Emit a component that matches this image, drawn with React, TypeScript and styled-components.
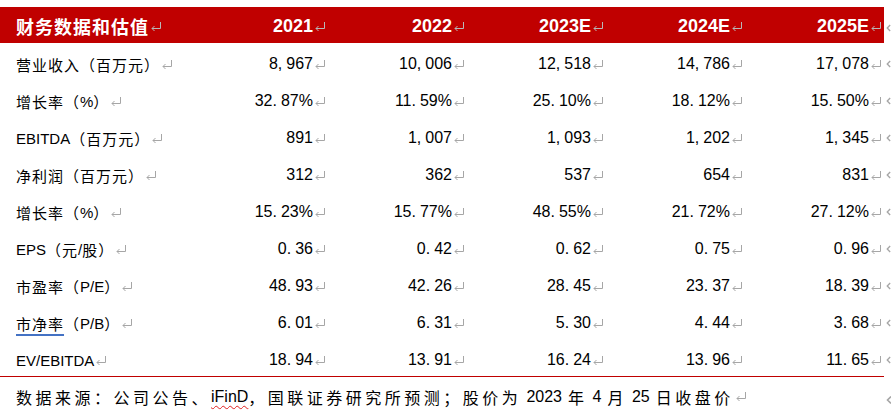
import React from 'react';
import styled, { createGlobalStyle } from 'styled-components';

const Global = createGlobalStyle`
  html, body { margin: 0; padding: 0; background: #fff; }
  body { font-family: "Liberation Sans", "Noto Sans CJK SC", sans-serif; color: #000; }
`;

const RED = '#c00000';
const MARK = '#a6a6a6';

const Page = styled.div`
  width: 891px;
  height: 417px;
  padding-top: 7px;
  box-sizing: border-box;
  overflow: hidden;
`;

const Table = styled.div`
  display: grid;
  grid-template-columns: 189px repeat(5, 139px) 7px;
  grid-template-rows: 36px repeat(9, 37px);
`;

const HeadCell = styled.div<{ $first?: boolean }>`
  background: ${RED};
  color: #fff;
  font-weight: 700;
  font-size: 18px;
  display: flex;
  align-items: center;
  justify-content: ${(p) => (p.$first ? 'flex-start' : 'flex-end')};
  padding: ${(p) => (p.$first ? '2px 0 0 16px' : '2px 2px 0 0')};
  box-sizing: border-box;
  white-space: nowrap;
`;

const LabelCell = styled.div`
  display: flex;
  align-items: center;
  padding: 5px 0 0 16px;
  font-size: 15px;
  white-space: nowrap;
  box-sizing: border-box;
`;

const NumCell = styled.div`
  display: flex;
  align-items: center;
  justify-content: flex-end;
  padding: 5px 2px 0 0;
  font-size: 16px;
  white-space: nowrap;
  box-sizing: border-box;
`;

const EdgeCell = styled.div`
  display: flex;
  align-items: center;
  padding: 5px 0 0 2px;
  box-sizing: border-box;
`;

const Cjk = styled.span<{ $gap: number }>`
  letter-spacing: ${(p) => p.$gap}px;
`;

const Latin = styled.span`
  padding: 0 6px 0 5px;
`;

const Sep = styled.span`
  margin-right: 4px;
`;

const GrammarMark = styled.span`
  text-decoration: underline;
  text-decoration-color: #4472c4;
  text-decoration-thickness: 1.5px;
  text-underline-offset: 4px;
`;

const SpellMark = styled.span`
  text-decoration: underline wavy #e02020;
  text-decoration-thickness: 1px;
  text-underline-offset: 3px;
`;

const TitleText = styled.span`
  letter-spacing: 1px;
  font-family: "Noto Sans CJK SC", sans-serif;
  font-weight: 700;
`;

const ReturnSvg = styled.svg`
  flex: none;
  margin-left: 1px;
`;

const Footer = styled.div`
  width: 884px;
  border-top: 1.5px solid ${RED};
  display: flex;
  align-items: center;
  height: 38px;
  padding: 2px 0 0 16px;
  box-sizing: border-box;
  font-size: 16px;
  white-space: nowrap;
  position: relative;
`;

const FooterEdge = styled.span`
  position: absolute;
  left: 886px;
  top: 14px;
`;

const Ret: React.FC<{ color?: string }> = ({ color = MARK }) => (
  <ReturnSvg width="12" height="11" viewBox="0 0 12 11">
    <path d="M10.5 1 V7.5 H2" fill="none" stroke={color} strokeWidth="1" />
    <path d="M4.5 5 L2 7.5 L4.5 10" fill="none" stroke={color} strokeWidth="1" />
  </ReturnSvg>
);

const Chev: React.FC = () => (
  <svg width="6" height="10" viewBox="0 0 6 10">
    <path d="M5 1.5 L1.5 5 L5 8.5" fill="none" stroke={MARK} strokeWidth="1.6" />
  </svg>
);

const CJK_RE = /([\u3000-\u303f\u4e00-\u9fff\uff00-\uffef]+)/;

const mixText = (s: string, gap: number) =>
  s.split(CJK_RE).map((part, i) =>
    CJK_RE.test(part) ? (
      <Cjk key={i} $gap={gap}>
        {part}
      </Cjk>
    ) : (
      <React.Fragment key={i}>{part}</React.Fragment>
    )
  );

const Num: React.FC<{ v: string }> = ({ v }) => (
  <>
    {v.split(/([,.])/).map((p, i) =>
      p === ',' || p === '.' ? <Sep key={i}>{p}</Sep> : <React.Fragment key={i}>{p}</React.Fragment>
    )}
  </>
);

const years = ['2021', '2022', '2023E', '2024E', '2025E'];

type Row = { label: React.ReactNode; values: string[] };

const rows: Row[] = [
  { label: mixText('营业收入（百万元）', 1), values: ['8,967', '10,006', '12,518', '14,786', '17,078'] },
  { label: mixText('增长率（%）', 1), values: ['32.87%', '11.59%', '25.10%', '18.12%', '15.50%'] },
  { label: mixText('EBITDA（百万元）', 1), values: ['891', '1,007', '1,093', '1,202', '1,345'] },
  { label: mixText('净利润（百万元）', 1), values: ['312', '362', '537', '654', '831'] },
  { label: mixText('增长率（%）', 1), values: ['15.23%', '15.77%', '48.55%', '21.72%', '27.12%'] },
  { label: mixText('EPS（元/股）', 1), values: ['0.36', '0.42', '0.62', '0.75', '0.96'] },
  { label: mixText('市盈率（P/E）', 1), values: ['48.93', '42.26', '28.45', '23.37', '18.39'] },
  {
    label: (
      <>
        <GrammarMark>
          <Cjk $gap={1}>市净率</Cjk>
        </GrammarMark>
        <Cjk $gap={1}>（</Cjk>P/B<Cjk $gap={1}>）</Cjk>
      </>
    ),
    values: ['6.01', '6.31', '5.30', '4.44', '3.68'],
  },
  { label: 'EV/EBITDA', values: ['18.94', '13.91', '16.24', '13.96', '11.65'] },
];

export default function App() {
  return (
    <Page>
      <Global />
      <Table>
        <HeadCell $first>
          <TitleText>财务数据和估值</TitleText>
          <Ret color="#b8b8b8" />
        </HeadCell>
        {years.map((y) => (
          <HeadCell key={y}>
            {y}
            <Ret color="#b8b8b8" />
          </HeadCell>
        ))}
        <EdgeCell>
          <Chev />
        </EdgeCell>
        {rows.map((r, ri) => (
          <React.Fragment key={ri}>
            <LabelCell>
              {r.label}
              <Ret />
            </LabelCell>
            {r.values.map((v, vi) => (
              <NumCell key={vi}>
                <Num v={v} />
                <Ret />
              </NumCell>
            ))}
            <EdgeCell>
              <Chev />
            </EdgeCell>
          </React.Fragment>
        ))}
      </Table>
      <Footer>
        <Cjk $gap={3.5}>数据来源：公司公告、</Cjk>
        <SpellMark>iFinD</SpellMark>
        <Cjk $gap={3.5}>，国联证券研究所预测；股价为</Cjk>
        <Latin>2023</Latin>
        <Cjk $gap={3.5}>年</Cjk>
        <Latin>4</Latin>
        <Cjk $gap={3.5}>月</Cjk>
        <Latin>25</Latin>
        <Cjk $gap={3.5}>日收盘价</Cjk>
        <Ret />
        <FooterEdge>
          <Chev />
        </FooterEdge>
      </Footer>
    </Page>
  );
}
